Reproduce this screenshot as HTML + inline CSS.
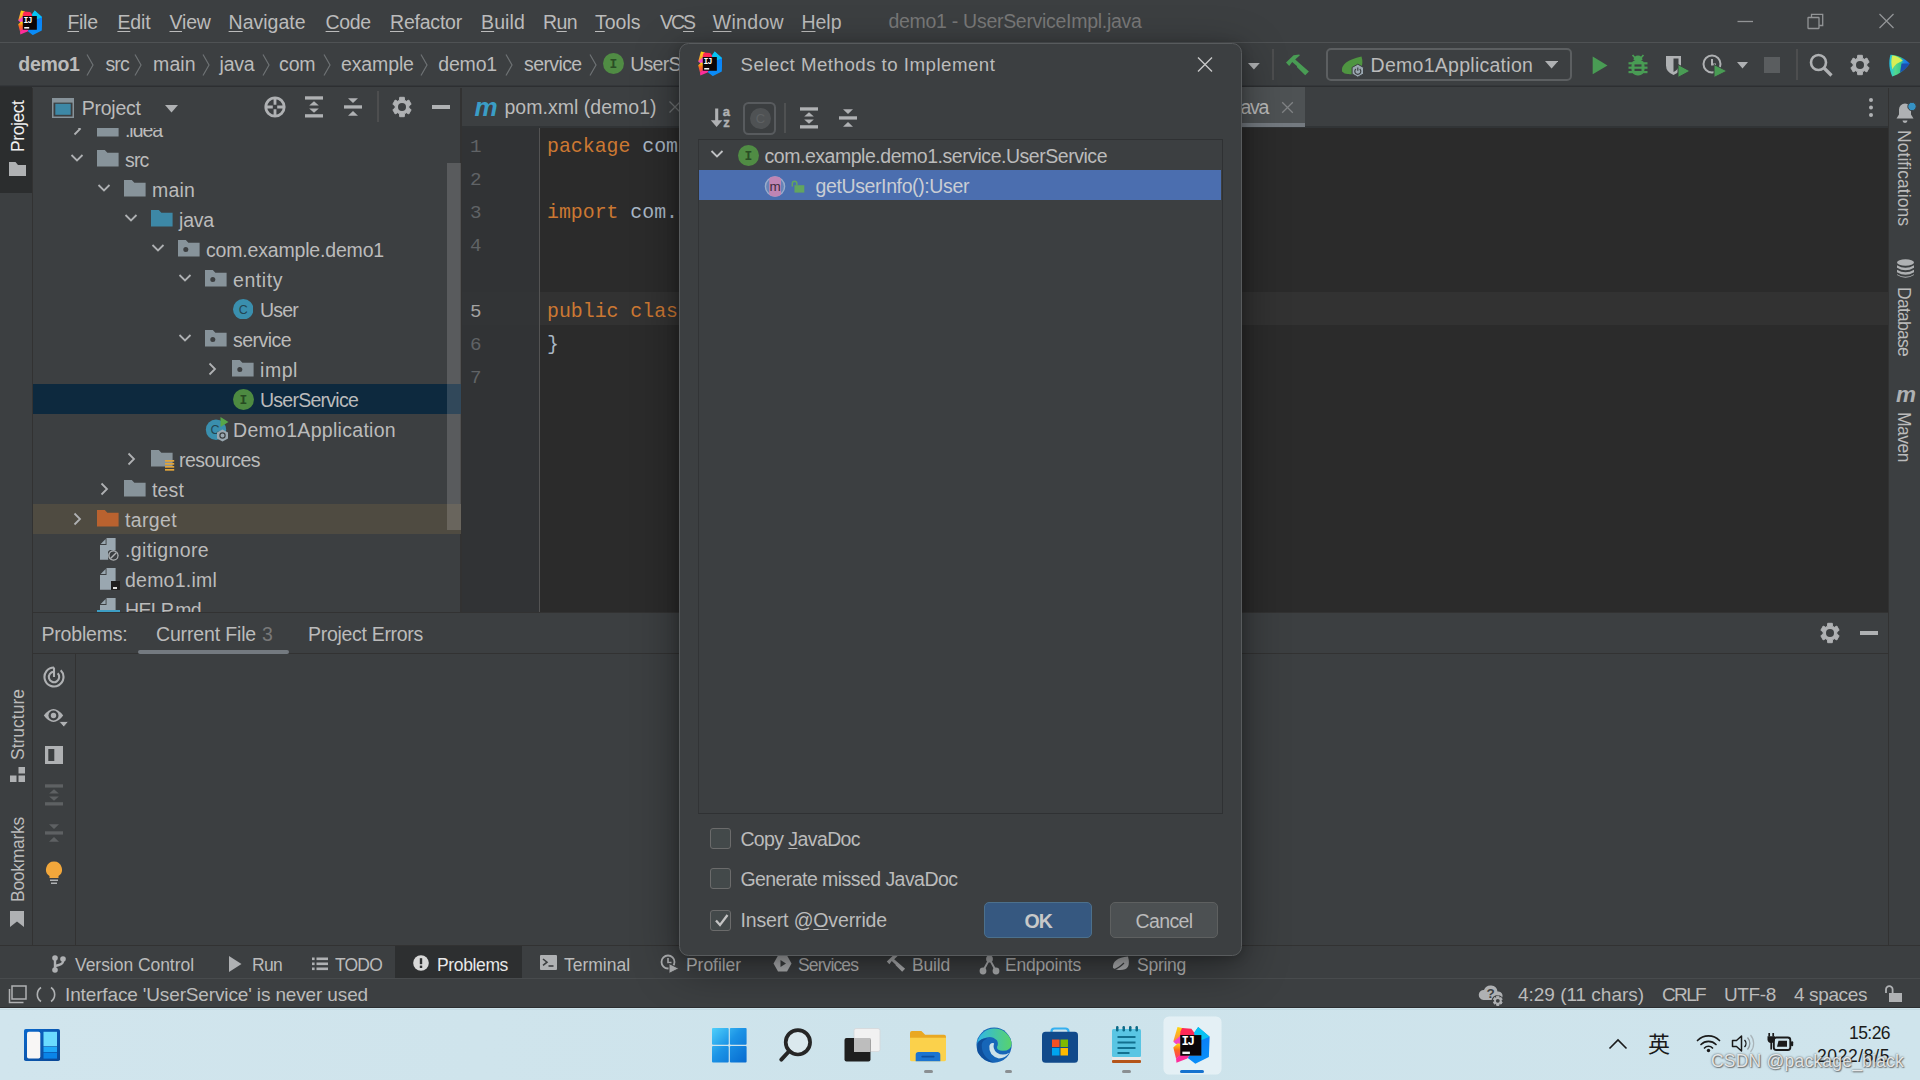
<!DOCTYPE html>
<html lang="en"><head><meta charset="utf-8"><title>demo1 - UserServiceImpl.java</title>
<style>
html,body{margin:0;padding:0}
body{width:1920px;height:1080px;overflow:hidden;background:#3c3f41;position:relative;font-family:"Liberation Sans",sans-serif}
.r{position:absolute;display:block}
.t{position:absolute;white-space:pre;font-family:"Liberation Sans",sans-serif}
.m{font-family:"Liberation Mono",monospace}
.clip{position:absolute;overflow:hidden}
u{text-decoration:underline;text-underline-offset:2px;text-decoration-thickness:1px}
</style></head>
<body>
<div class="r" style="left:0px;top:0px;width:1920px;height:1008px;background:#3c3f41;"></div>
<div class="r" style="left:0px;top:42px;width:1920px;height:1px;background:#4f5254;"></div>
<div class="r" style="left:0px;top:85px;width:1920px;height:1px;background:#34373a;"></div>
<div class="r" style="left:0px;top:86px;width:1920px;height:1px;background:#2d2f31;"></div>
<div class="r" style="left:0px;top:88px;width:32px;height:858px;background:#3c3f41;"></div>
<div class="r" style="left:0px;top:87px;width:32px;height:105.5px;background:#2b2d2e;"></div>
<div class="r" style="left:32px;top:88px;width:1px;height:858px;background:#323232;"></div>
<div class="r" style="left:1888px;top:88px;width:1px;height:858px;background:#323232;"></div>
<div class="r" style="left:460px;top:88px;width:2px;height:525px;background:#323232;"></div>
<div class="r" style="left:462px;top:88px;width:1426px;height:39px;background:#3c3f41;"></div>
<div class="r" style="left:462px;top:126px;width:1426px;height:2px;background:#313436;"></div>
<div class="r" style="left:462px;top:128px;width:1426px;height:485px;background:#2b2b2b;"></div>
<div class="r" style="left:462px;top:128px;width:77px;height:485px;background:#313335;"></div>
<div class="r" style="left:538.5px;top:128px;width:1.7px;height:485px;background:#535353;"></div>
<div class="r" style="left:462px;top:292px;width:77px;height:33px;background:#323436;"></div>
<div class="r" style="left:540px;top:292px;width:1348px;height:33px;background:#323232;"></div>
<div class="r" style="left:33px;top:612px;width:1855px;height:1px;background:#323232;"></div>
<div class="r" style="left:33px;top:653px;width:1855px;height:1px;background:#323232;"></div>
<div class="r" style="left:75px;top:654px;width:1px;height:291px;background:#323232;"></div>
<div class="r" style="left:0px;top:945px;width:1920px;height:1px;background:#323232;"></div>
<div class="r" style="left:395px;top:946px;width:127px;height:32px;background:#2d2f30;"></div>
<div class="r" style="left:0px;top:978px;width:1920px;height:1px;background:#484b4d;"></div>
<span class="t" style="left:67.40px;top:13.29px;font-size:19.50px;line-height:19.50px;color:#bbbbbb;letter-spacing:-0.280px;"><u>F</u>ile</span>
<span class="t" style="left:117.40px;top:13.29px;font-size:19.50px;line-height:19.50px;color:#bbbbbb;letter-spacing:-0.100px;"><u>E</u>dit</span>
<span class="t" style="left:169.50px;top:13.29px;font-size:19.50px;line-height:19.50px;color:#bbbbbb;letter-spacing:-0.178px;"><u>V</u>iew</span>
<span class="t" style="left:228.60px;top:13.29px;font-size:19.50px;line-height:19.50px;color:#bbbbbb;letter-spacing:-0.007px;"><u>N</u>avigate</span>
<span class="t" style="left:325.60px;top:13.29px;font-size:19.50px;line-height:19.50px;color:#bbbbbb;letter-spacing:-0.354px;"><u>C</u>ode</span>
<span class="t" style="left:390.00px;top:13.29px;font-size:19.50px;line-height:19.50px;color:#bbbbbb;letter-spacing:-0.211px;"><u>R</u>efactor</span>
<span class="t" style="left:481.00px;top:13.29px;font-size:19.50px;line-height:19.50px;color:#bbbbbb;letter-spacing:0.128px;"><u>B</u>uild</span>
<span class="t" style="left:543.00px;top:13.29px;font-size:19.50px;line-height:19.50px;color:#bbbbbb;letter-spacing:-0.590px;">R<u>u</u>n</span>
<span class="t" style="left:595.00px;top:13.29px;font-size:19.50px;line-height:19.50px;color:#bbbbbb;letter-spacing:-0.004px;"><u>T</u>ools</span>
<span class="t" style="left:660.00px;top:13.29px;font-size:19.50px;line-height:19.50px;color:#bbbbbb;letter-spacing:-2.032px;">VC<u>S</u></span>
<span class="t" style="left:712.80px;top:13.29px;font-size:19.50px;line-height:19.50px;color:#bbbbbb;letter-spacing:0.291px;"><u>W</u>indow</span>
<span class="t" style="left:801.40px;top:13.29px;font-size:19.50px;line-height:19.50px;color:#bbbbbb;letter-spacing:-0.001px;"><u>H</u>elp</span>
<span class="t" style="left:888.50px;top:11.59px;font-size:19.50px;line-height:19.50px;color:#787878;letter-spacing:-0.291px;">demo1 - UserServiceImpl.java</span>
<svg class="r" style="left:1730px;top:7.2px;" width="180" height="28" viewBox="0 0 180 28"><g stroke="#929496" stroke-width="1.300" fill="none"><path d="M7.500 14.500h15.500"/><rect x="78" y="10.500" width="11" height="11" rx="0.400"/><path d="M81.500 10.500v-3.200h11.200v11.200h-3.500"/><path d="M149.500 7l14 14M163.500 7l-14 14"/></g></svg>
<span class="t" style="left:18.30px;top:55.49px;font-size:19.50px;line-height:19.50px;color:#bbbbbb;letter-spacing:-0.330px;font-weight:bold;">demo1</span>
<span class="t" style="left:105.50px;top:55.49px;font-size:19.50px;line-height:19.50px;color:#bbbbbb;letter-spacing:-0.898px;">src</span>
<span class="t" style="left:153.00px;top:55.49px;font-size:19.50px;line-height:19.50px;color:#bbbbbb;letter-spacing:0.134px;">main</span>
<span class="t" style="left:219.50px;top:55.49px;font-size:19.50px;line-height:19.50px;color:#bbbbbb;letter-spacing:-0.193px;">java</span>
<span class="t" style="left:279.00px;top:55.49px;font-size:19.50px;line-height:19.50px;color:#bbbbbb;letter-spacing:-0.112px;">com</span>
<span class="t" style="left:341.00px;top:55.49px;font-size:19.50px;line-height:19.50px;color:#bbbbbb;letter-spacing:-0.129px;">example</span>
<span class="t" style="left:438.30px;top:55.49px;font-size:19.50px;line-height:19.50px;color:#bbbbbb;letter-spacing:-0.184px;">demo1</span>
<span class="t" style="left:524.00px;top:55.49px;font-size:19.50px;line-height:19.50px;color:#bbbbbb;letter-spacing:-0.609px;">service</span>
<svg class="r" style="left:85.3px;top:53.3px;" width="10" height="24" viewBox="0 0 10 24"><path d="M2 1.500l6 10.500-6 10.500" stroke="#6e7274" stroke-width="1.200" fill="none"/></svg>
<svg class="r" style="left:133.3px;top:53.3px;" width="10" height="24" viewBox="0 0 10 24"><path d="M2 1.500l6 10.500-6 10.500" stroke="#6e7274" stroke-width="1.200" fill="none"/></svg>
<svg class="r" style="left:201.3px;top:53.3px;" width="10" height="24" viewBox="0 0 10 24"><path d="M2 1.500l6 10.500-6 10.500" stroke="#6e7274" stroke-width="1.200" fill="none"/></svg>
<svg class="r" style="left:260.8px;top:53.3px;" width="10" height="24" viewBox="0 0 10 24"><path d="M2 1.500l6 10.500-6 10.500" stroke="#6e7274" stroke-width="1.200" fill="none"/></svg>
<svg class="r" style="left:321.8px;top:53.3px;" width="10" height="24" viewBox="0 0 10 24"><path d="M2 1.500l6 10.500-6 10.500" stroke="#6e7274" stroke-width="1.200" fill="none"/></svg>
<svg class="r" style="left:419.3px;top:53.3px;" width="10" height="24" viewBox="0 0 10 24"><path d="M2 1.500l6 10.500-6 10.500" stroke="#6e7274" stroke-width="1.200" fill="none"/></svg>
<svg class="r" style="left:504.3px;top:53.3px;" width="10" height="24" viewBox="0 0 10 24"><path d="M2 1.500l6 10.500-6 10.500" stroke="#6e7274" stroke-width="1.200" fill="none"/></svg>
<svg class="r" style="left:587.8px;top:53.3px;" width="10" height="24" viewBox="0 0 10 24"><path d="M2 1.500l6 10.500-6 10.500" stroke="#6e7274" stroke-width="1.200" fill="none"/></svg>
<svg class="r" style="left:52px;top:98px;" width="22" height="20" viewBox="0 0 22 20"><rect x="0.750" y="0.750" width="20.500" height="18.500" fill="#3c3f41" stroke="#87939a" stroke-width="1.500"/><rect x="0" y="0" width="22" height="4.600" fill="#87939a"/><rect x="3.300" y="5.800" width="15.400" height="11" fill="#3d88a6"/></svg>
<span class="t" style="left:81.75px;top:98.69px;font-size:19.50px;line-height:19.50px;color:#bbbbbb;letter-spacing:-0.241px;">Project</span>
<svg class="r" style="left:165px;top:104.5px;" width="13" height="8" viewBox="0 0 13 8"><path d="M0 0h13l-6.500 7.500z" fill="#afb1b3"/></svg>
<svg class="r" style="left:264px;top:96px;" width="22" height="22" viewBox="0 0 22 22"><g stroke="#afb1b3" stroke-width="2.800" fill="none"><circle cx="11" cy="11" r="9.200"/><path d="M11 1.500v7.300M11 13.200v7.300M1.500 11h7.300M13.200 11h7.300"/></g></svg>
<svg class="r" style="left:304.7px;top:96px;" width="18" height="22" viewBox="0 0 18 22"><g fill="#afb1b3"><rect x="0" y="0.300" width="18" height="3.300"/><rect x="0" y="18.200" width="18" height="3.300"/><path d="M9 5.200l4.800 4.300h-9.600z"/><path d="M9 16.800l4.800-4.300h-9.600z"/></g></svg>
<svg class="r" style="left:343.5px;top:97.8px;" width="18" height="18.4" viewBox="0 0 18 18.4"><g fill="#afb1b3"><rect x="0" y="7.300" width="18" height="3.300"/><path d="M9 5l5-4.700h-10z"/><path d="M9 13l5 4.700h-10z"/></g></svg>
<div class="r" style="left:377px;top:91px;width:2px;height:30.5px;background:#4d4e4f;"></div>
<svg class="r" style="left:390.7px;top:96px;" width="22" height="22" viewBox="0 0 22 22"><g transform="translate(11 11)"><polygon points="-2.49,-6.82 -2.30,-9.70 2.30,-9.70 2.49,-6.82 4.36,-5.67 6.83,-6.95 9.13,-2.76 6.85,-1.14 6.85,1.14 9.13,2.76 6.83,6.95 4.36,5.67 2.49,6.82 2.30,9.70 -2.30,9.70 -2.49,6.82 -4.36,5.67 -6.83,6.95 -9.13,2.76 -6.85,1.14 -6.85,-1.14 -9.13,-2.76 -6.83,-6.95 -4.36,-5.67" fill="#afb1b3" stroke="#afb1b3" stroke-width="1" stroke-linejoin="round"/><circle r="4" fill="#3c3f41"/></g></svg>
<div class="r" style="left:431.7px;top:105.35px;width:18px;height:3.3px;background:#afb1b3;"></div>
<div class="clip" style="left:33px;top:128px;width:427.500px;height:484px">
<div class="r" style="left:0px;top:256px;width:428px;height:30px;background:#0d293e;"></div>
<div class="r" style="left:0px;top:376px;width:428px;height:30px;background:#4f4b41;"></div>
<svg class="r" style="left:38px;top:-7.5px;" width="12" height="16" viewBox="0 0 12 16"><path d="M3.500 2.500l5.500 5.500-5.500 5.500" stroke="#afb1b3" stroke-width="1.800" fill="none"/></svg>
<svg class="r" style="left:64.2px;top:-8.4px;" width="22" height="17" viewBox="0 0 22 17"><path d="M0 0h7.800l2.600 2.800H21.600V16.600H0z" fill="#87939a"/></svg>
<span class="t" style="left:92.00px;top:-7.01px;font-size:19.50px;line-height:19.50px;color:#bbbbbb;letter-spacing:-1.056px;">.idea</span>
<svg class="r" style="left:35.7px;top:24.1px;" width="16" height="12" viewBox="0 0 16 12"><path d="M2.500 3l5.500 5.500 5.500-5.500" stroke="#afb1b3" stroke-width="1.800" fill="none"/></svg>
<svg class="r" style="left:64.2px;top:21.6px;" width="22" height="17" viewBox="0 0 22 17"><path d="M0 0h7.800l2.600 2.800H21.600V16.600H0z" fill="#87939a"/></svg>
<span class="t" style="left:92.00px;top:22.99px;font-size:19.50px;line-height:19.50px;color:#bbbbbb;letter-spacing:-0.831px;">src</span>
<svg class="r" style="left:62.7px;top:54.1px;" width="16" height="12" viewBox="0 0 16 12"><path d="M2.500 3l5.500 5.500 5.500-5.500" stroke="#afb1b3" stroke-width="1.800" fill="none"/></svg>
<svg class="r" style="left:91.2px;top:51.6px;" width="22" height="17" viewBox="0 0 22 17"><path d="M0 0h7.800l2.600 2.800H21.600V16.600H0z" fill="#87939a"/></svg>
<span class="t" style="left:119.00px;top:52.99px;font-size:19.50px;line-height:19.50px;color:#bbbbbb;letter-spacing:0.184px;">main</span>
<svg class="r" style="left:89.7px;top:84.1px;" width="16" height="12" viewBox="0 0 16 12"><path d="M2.500 3l5.500 5.500 5.500-5.500" stroke="#afb1b3" stroke-width="1.800" fill="none"/></svg>
<svg class="r" style="left:118.2px;top:81.6px;" width="22" height="17" viewBox="0 0 22 17"><path d="M0 0h7.800l2.600 2.800H21.600V16.600H0z" fill="#3d88a6"/></svg>
<span class="t" style="left:146.00px;top:82.99px;font-size:19.50px;line-height:19.50px;color:#bbbbbb;letter-spacing:-0.193px;">java</span>
<svg class="r" style="left:116.7px;top:114.1px;" width="16" height="12" viewBox="0 0 16 12"><path d="M2.500 3l5.500 5.500 5.500-5.500" stroke="#afb1b3" stroke-width="1.800" fill="none"/></svg>
<svg class="r" style="left:145.2px;top:111.6px;" width="22" height="17" viewBox="0 0 22 17"><path d="M0 0h7.800l2.600 2.800H21.600V16.600H0z" fill="#87939a"/><circle cx="7.800" cy="9.600" r="2.500" fill="#3c3f41"/></svg>
<span class="t" style="left:173.00px;top:112.99px;font-size:19.50px;line-height:19.50px;color:#bbbbbb;letter-spacing:-0.176px;">com.example.demo1</span>
<svg class="r" style="left:143.7px;top:144.1px;" width="16" height="12" viewBox="0 0 16 12"><path d="M2.500 3l5.500 5.500 5.500-5.500" stroke="#afb1b3" stroke-width="1.800" fill="none"/></svg>
<svg class="r" style="left:172.2px;top:141.6px;" width="22" height="17" viewBox="0 0 22 17"><path d="M0 0h7.800l2.600 2.800H21.600V16.600H0z" fill="#87939a"/><circle cx="7.800" cy="9.600" r="2.500" fill="#3c3f41"/></svg>
<span class="t" style="left:200.00px;top:142.99px;font-size:19.50px;line-height:19.50px;color:#bbbbbb;letter-spacing:0.566px;">entity</span>
<svg class="r" style="left:199.5px;top:170.95px;" width="20.5" height="20.5" viewBox="0 0 20.5 20.5"><circle cx="10.25" cy="10.25" r="10.25" fill="#3a8fae"/><text x="10.25" y="14.5" font-family="Liberation Sans" font-size="12.5" font-weight="normal" text-anchor="middle" fill="#234552">C</text></svg>
<span class="t" style="left:227.00px;top:172.99px;font-size:19.50px;line-height:19.50px;color:#bbbbbb;letter-spacing:-0.792px;">User</span>
<svg class="r" style="left:143.7px;top:204.1px;" width="16" height="12" viewBox="0 0 16 12"><path d="M2.500 3l5.500 5.500 5.500-5.500" stroke="#afb1b3" stroke-width="1.800" fill="none"/></svg>
<svg class="r" style="left:172.2px;top:201.6px;" width="22" height="17" viewBox="0 0 22 17"><path d="M0 0h7.800l2.600 2.800H21.600V16.600H0z" fill="#87939a"/><circle cx="7.800" cy="9.600" r="2.500" fill="#3c3f41"/></svg>
<span class="t" style="left:200.00px;top:202.99px;font-size:19.50px;line-height:19.50px;color:#bbbbbb;letter-spacing:-0.538px;">service</span>
<svg class="r" style="left:173px;top:232.5px;" width="12" height="16" viewBox="0 0 12 16"><path d="M3.500 2.500l5.500 5.500-5.500 5.500" stroke="#afb1b3" stroke-width="1.800" fill="none"/></svg>
<svg class="r" style="left:199.2px;top:231.6px;" width="22" height="17" viewBox="0 0 22 17"><path d="M0 0h7.800l2.600 2.800H21.600V16.600H0z" fill="#87939a"/><circle cx="7.800" cy="9.600" r="2.500" fill="#3c3f41"/></svg>
<span class="t" style="left:227.00px;top:232.99px;font-size:19.50px;line-height:19.50px;color:#bbbbbb;letter-spacing:0.562px;">impl</span>
<svg class="r" style="left:200px;top:261px;" width="21" height="21" viewBox="0 0 21 21"><circle cx="10.5" cy="10.5" r="10.5" fill="#4d8a41"/><text x="10.5" y="14.92" font-family="Liberation Mono" font-size="13" font-weight="bold" text-anchor="middle" fill="#274a22">I</text></svg>
<span class="t" style="left:227.00px;top:262.99px;font-size:19.50px;line-height:19.50px;color:#bbbbbb;letter-spacing:-0.745px;">UserService</span>
<svg class="r" style="left:172px;top:288.5px;" width="26" height="26" viewBox="0 0 26 26"><circle cx="11" cy="12.700" r="10.200" fill="#3a8fae"/><text x="10" y="17" text-anchor="middle" font-family="Liberation Sans" font-size="12.500" fill="#234552">C</text><path d="M15.500 0l8 5-8 5z" fill="#57a64a"/><path d="M17.500 12.500l5.500 3v6l-5.500 3-5.500-3v-6z" fill="#9aa7b0"/><circle cx="17.500" cy="18.500" r="2.600" fill="none" stroke="#3c3f41" stroke-width="1.200"/></svg>
<span class="t" style="left:200.00px;top:292.99px;font-size:19.50px;line-height:19.50px;color:#bbbbbb;letter-spacing:0.297px;">Demo1Application</span>
<svg class="r" style="left:92px;top:322.5px;" width="12" height="16" viewBox="0 0 12 16"><path d="M3.500 2.500l5.500 5.500-5.500 5.500" stroke="#afb1b3" stroke-width="1.800" fill="none"/></svg>
<svg class="r" style="left:118.2px;top:321.8px;" width="22" height="17" viewBox="0 0 22 17"><path d="M0 0h7.800l2.600 2.800H21.600V16.600H0z" fill="#87939a"/></svg>
<svg class="r" style="left:132px;top:332px;" width="11" height="11" viewBox="0 0 11 11"><g fill="#e2a53a"><rect x="0" y="0" width="9.200" height="1.700"/><rect x="0" y="3" width="9.200" height="1.700"/><rect x="0" y="6" width="9.200" height="1.700"/><rect x="0" y="9" width="9.200" height="1.700"/></g></svg>
<span class="t" style="left:146.00px;top:322.99px;font-size:19.50px;line-height:19.50px;color:#bbbbbb;letter-spacing:-0.512px;">resources</span>
<svg class="r" style="left:65px;top:352.5px;" width="12" height="16" viewBox="0 0 12 16"><path d="M3.500 2.500l5.500 5.500-5.500 5.500" stroke="#afb1b3" stroke-width="1.800" fill="none"/></svg>
<svg class="r" style="left:91.2px;top:351.6px;" width="22" height="17" viewBox="0 0 22 17"><path d="M0 0h7.800l2.600 2.800H21.600V16.600H0z" fill="#87939a"/></svg>
<span class="t" style="left:119.00px;top:352.99px;font-size:19.50px;line-height:19.50px;color:#bbbbbb;letter-spacing:0.143px;">test</span>
<svg class="r" style="left:38px;top:382.5px;" width="12" height="16" viewBox="0 0 12 16"><path d="M3.500 2.500l5.500 5.500-5.500 5.500" stroke="#afb1b3" stroke-width="1.800" fill="none"/></svg>
<svg class="r" style="left:64.2px;top:381.6px;" width="22" height="17" viewBox="0 0 22 17"><path d="M0 0h7.800l2.600 2.800H21.600V16.600H0z" fill="#b9622f"/></svg>
<span class="t" style="left:92.00px;top:382.99px;font-size:19.50px;line-height:19.50px;color:#bbbbbb;letter-spacing:0.357px;">target</span>
<svg class="r" style="left:67px;top:410.2px;" width="17" height="23" viewBox="0 0 17 23"><path d="M6.500 0h9.100v21.700H0V7h6.500z" fill="#9aa7b0"/><path d="M0.700 6L5.600 0.900v5.100z" fill="#9aa7b0"/></svg>
<span class="t" style="left:92.00px;top:412.99px;font-size:19.50px;line-height:19.50px;color:#bbbbbb;letter-spacing:0.379px;">.gitignore</span>
<svg class="r" style="left:67px;top:440.2px;" width="17" height="23" viewBox="0 0 17 23"><path d="M6.500 0h9.100v21.700H0V7h6.500z" fill="#9aa7b0"/><path d="M0.700 6L5.600 0.900v5.100z" fill="#9aa7b0"/></svg>
<span class="t" style="left:92.00px;top:442.99px;font-size:19.50px;line-height:19.50px;color:#bbbbbb;letter-spacing:0.228px;">demo1.iml</span>
<svg class="r" style="left:67px;top:470.2px;" width="17" height="23" viewBox="0 0 17 23"><path d="M6.500 0h9.100v21.700H0V7h6.500z" fill="#9aa7b0"/><path d="M0.700 6L5.600 0.900v5.100z" fill="#9aa7b0"/></svg>
<span class="t" style="left:92.00px;top:472.99px;font-size:19.50px;line-height:19.50px;color:#bbbbbb;letter-spacing:-0.704px;">HELP.md</span>
<svg class="r" style="left:74.6px;top:421.8px;" width="12" height="12" viewBox="0 0 12 12"><circle cx="5.500" cy="5.500" r="4.600" fill="#3c3f41" stroke="#afb1b3" stroke-width="1.400"/><circle cx="5.500" cy="5.500" r="6" fill="none" stroke="#3c3f41" stroke-width="1.200"/><path d="M2.500 8.500l6-6" stroke="#afb1b3" stroke-width="1.400"/></svg>
<div class="r" style="left:78px;top:453px;width:9px;height:9px;background:#1e1e1e;"></div>
<div class="r" style="left:80px;top:459px;width:4px;height:1.5px;background:#ddd;"></div>
<div class="r" style="left:64px;top:482px;width:23px;height:2px;background:#3d9ec4;"></div>
<div class="r" style="left:414px;top:35px;width:13.5px;height:367px;background:rgba(255,255,255,0.15);"></div>
</div>
<span class="t" style="left:474.50px;top:93.89px;font-size:26.00px;line-height:26.00px;color:#3a9dc6;letter-spacing:-0.120px;font-weight:bold;font-style:italic;">m</span>
<span class="t" style="left:504.50px;top:98.19px;font-size:19.50px;line-height:19.50px;color:#bbbbbb;letter-spacing:0.020px;">pom.xml (demo1)</span>
<svg class="r" style="left:668px;top:100px;" width="14" height="14" viewBox="0 0 14 14"><path d="M1.500 1.500l11 11M12.500 1.500l-11 11" stroke="#6e7173" stroke-width="1.300"/></svg>
<div class="r" style="left:1040px;top:87px;width:265px;height:40px;background:#4e5254;"></div>
<div class="r" style="left:1040px;top:123px;width:265px;height:4px;background:#747a80;"></div>
<span class="t" style="left:1109.80px;top:98.19px;font-size:19.50px;line-height:19.50px;color:#bbbbbb;letter-spacing:-1.301px;">UserServiceImpl.java</span>
<svg class="r" style="left:1280.5px;top:100.5px;" width="13" height="13" viewBox="0 0 13 13"><path d="M1.200 1.200l10.600 10.600M11.800 1.200l-10.600 10.600" stroke="#808385" stroke-width="1.300"/></svg>
<svg class="r" style="left:1867px;top:97px;" width="8" height="22" viewBox="0 0 8 22"><g fill="#afb1b3"><circle cx="4" cy="3" r="2"/><circle cx="4" cy="10.500" r="2"/><circle cx="4" cy="18" r="2"/></g></svg>
<span class="t m" style="left:470.00px;top:138.28px;font-size:19.20px;line-height:19.20px;color:#606366;">1</span>
<span class="t m" style="left:470.00px;top:171.28px;font-size:19.20px;line-height:19.20px;color:#606366;">2</span>
<span class="t m" style="left:470.00px;top:204.28px;font-size:19.20px;line-height:19.20px;color:#606366;">3</span>
<span class="t m" style="left:470.00px;top:237.28px;font-size:19.20px;line-height:19.20px;color:#606366;">4</span>
<span class="t m" style="left:470.00px;top:303.28px;font-size:19.20px;line-height:19.20px;color:#a4a3a3;">5</span>
<span class="t m" style="left:470.00px;top:336.28px;font-size:19.20px;line-height:19.20px;color:#606366;">6</span>
<span class="t m" style="left:470.00px;top:369.28px;font-size:19.20px;line-height:19.20px;color:#606366;">7</span>
<span class="t m" style="left:547.00px;top:136.78px;font-size:19.85px;line-height:19.85px;color:#a9b7c6;"><span style="color:#cc7832">package</span> com.example.demo1.service.impl;</span>
<span class="t m" style="left:547.00px;top:202.78px;font-size:19.85px;line-height:19.85px;color:#a9b7c6;"><span style="color:#cc7832">import</span> com.example.demo1.service.UserService;</span>
<span class="t m" style="left:547.00px;top:301.78px;font-size:19.85px;line-height:19.85px;color:#a9b7c6;"><span style="color:#cc7832">public class</span> UserServiceImpl <span style="color:#cc7832">implements</span> UserService {</span>
<span class="t m" style="left:547.00px;top:334.78px;font-size:19.85px;line-height:19.85px;color:#a9b7c6;">}</span>
<span class="t" style="left:41.50px;top:624.89px;font-size:19.50px;line-height:19.50px;color:#bbbbbb;letter-spacing:-0.197px;">Problems:</span>
<span class="t" style="left:156.00px;top:624.89px;font-size:19.50px;line-height:19.50px;color:#bbbbbb;letter-spacing:-0.154px;">Current File</span>
<span class="t" style="left:262.00px;top:624.89px;font-size:19.50px;line-height:19.50px;color:#787878;letter-spacing:-1.344px;">3</span>
<div class="r" style="left:138px;top:650px;width:151px;height:3.5px;background:#747a80;border-radius:2px;"></div>
<span class="t" style="left:308.00px;top:624.89px;font-size:19.50px;line-height:19.50px;color:#bbbbbb;letter-spacing:-0.299px;">Project Errors</span>
<svg class="r" style="left:1819px;top:622px;" width="22" height="22" viewBox="0 0 22 22"><g transform="translate(11 11)"><polygon points="-2.49,-6.82 -2.30,-9.70 2.30,-9.70 2.49,-6.82 4.36,-5.67 6.83,-6.95 9.13,-2.76 6.85,-1.14 6.85,1.14 9.13,2.76 6.83,6.95 4.36,5.67 2.49,6.82 2.30,9.70 -2.30,9.70 -2.49,6.82 -4.36,5.67 -6.83,6.95 -9.13,2.76 -6.85,1.14 -6.85,-1.14 -9.13,-2.76 -6.83,-6.95 -4.36,-5.67" fill="#afb1b3" stroke="#afb1b3" stroke-width="1" stroke-linejoin="round"/><circle r="4" fill="#3c3f41"/></g></svg>
<div class="r" style="left:1860px;top:631.35px;width:18px;height:3.3px;background:#afb1b3;"></div>
<svg class="r" style="left:43px;top:666px;" width="22" height="22" viewBox="0 0 22 22"><g stroke="#afb1b3" stroke-width="2.100" fill="none"><path d="M11 1.500a9.500 9.500 0 1 0 6.720 2.780"/><path d="M11 5.800a5.200 5.200 0 1 0 3.680 1.520"/><path d="M11 1.500v9.500"/></g></svg>
<svg class="r" style="left:43px;top:706px;" width="26" height="24" viewBox="0 0 26 24"><path d="M0.800 9.500Q10.500-3.500 20.200 9.500Q10.500 22.500 0.800 9.500z" fill="#afb1b3"/><circle cx="10.500" cy="9.500" r="5" fill="#3c3f41"/><circle cx="10.500" cy="9.500" r="2.700" fill="#afb1b3"/><path d="M16 15.500h9.500l-4.750 5.500z" fill="#afb1b3" stroke="#3c3f41" stroke-width="0.800"/></svg>
<svg class="r" style="left:45px;top:746px;" width="18" height="18" viewBox="0 0 18 18"><rect x="0" y="0" width="18" height="18" fill="#afb1b3"/><rect x="3.300" y="3" width="6" height="12" fill="#3c3f41"/></svg>
<svg class="r" style="left:45px;top:784px;" width="18" height="22" viewBox="0 0 18 22"><g fill="#5e6163"><rect x="0" y="0.300" width="18" height="3.300"/><rect x="0" y="18.200" width="18" height="3.300"/><path d="M9 5.200l4.800 4.300h-9.600z"/><path d="M9 16.800l4.800-4.300h-9.600z"/></g></svg>
<svg class="r" style="left:45px;top:823.8px;" width="18" height="18.4" viewBox="0 0 18 18.4"><g fill="#5e6163"><rect x="0" y="7.300" width="18" height="3.300"/><path d="M9 5l5-4.700h-10z"/><path d="M9 13l5 4.700h-10z"/></g></svg>
<svg class="r" style="left:45px;top:861px;" width="18" height="24" viewBox="0 0 18 24"><path d="M9 0.500a8 8 0 0 1 4.500 14.600v1.900h-9v-1.900a8 8 0 0 1 4.500-14.600z" fill="#f2a73b"/><rect x="5" y="18.500" width="8" height="1.500" fill="#afb1b3"/><rect x="6" y="21.500" width="6" height="1.500" fill="#afb1b3"/></svg>
<span class="t" style="left:75.00px;top:956.59px;font-size:17.50px;line-height:17.50px;color:#bbbbbb;letter-spacing:-0.043px;">Version Control</span>
<span class="t" style="left:252.00px;top:956.59px;font-size:17.50px;line-height:17.50px;color:#bbbbbb;letter-spacing:-0.701px;">Run</span>
<span class="t" style="left:335.00px;top:956.59px;font-size:17.50px;line-height:17.50px;color:#bbbbbb;letter-spacing:-0.808px;">TODO</span>
<span class="t" style="left:437.00px;top:956.59px;font-size:17.50px;line-height:17.50px;color:#e8e8e8;letter-spacing:-0.364px;">Problems</span>
<span class="t" style="left:564.00px;top:956.59px;font-size:17.50px;line-height:17.50px;color:#bbbbbb;letter-spacing:-0.016px;">Terminal</span>
<span class="t" style="left:686.00px;top:956.59px;font-size:17.50px;line-height:17.50px;color:#bbbbbb;letter-spacing:-0.054px;">Profiler</span>
<span class="t" style="left:798.00px;top:956.59px;font-size:17.50px;line-height:17.50px;color:#bbbbbb;letter-spacing:-0.888px;">Services</span>
<span class="t" style="left:912.00px;top:956.59px;font-size:17.50px;line-height:17.50px;color:#bbbbbb;letter-spacing:-0.183px;">Build</span>
<span class="t" style="left:1005.00px;top:956.59px;font-size:17.50px;line-height:17.50px;color:#bbbbbb;letter-spacing:-0.203px;">Endpoints</span>
<span class="t" style="left:1137.00px;top:956.59px;font-size:17.50px;line-height:17.50px;color:#bbbbbb;letter-spacing:-0.264px;">Spring</span>
<svg class="r" style="left:51px;top:955px;" width="16" height="18" viewBox="0 0 16 18"><g stroke="#afb1b3" stroke-width="2.400" fill="none"><path d="M4 3v12"/><path d="M12 4v2.500q0 3-8 4.500"/></g><circle cx="4" cy="3" r="2.800" fill="#afb1b3"/><circle cx="12" cy="4" r="2.800" fill="#afb1b3"/><circle cx="4" cy="15" r="2.800" fill="#afb1b3"/></svg>
<svg class="r" style="left:229px;top:956px;" width="13" height="16" viewBox="0 0 13 16"><path d="M0 0l12.500 8-12.500 8z" fill="#afb1b3"/></svg>
<svg class="r" style="left:312px;top:957px;" width="16" height="14" viewBox="0 0 16 14"><g fill="#afb1b3"><rect x="0" y="0.500" width="2.600" height="2.600"/><rect x="4.500" y="0.500" width="11.500" height="2.600"/><rect x="0" y="5.500" width="2.600" height="2.600"/><rect x="4.500" y="5.500" width="11.500" height="2.600"/><rect x="0" y="10.500" width="2.600" height="2.600"/><rect x="4.500" y="10.500" width="11.500" height="2.600"/></g></svg>
<svg class="r" style="left:413px;top:955px;" width="16" height="16" viewBox="0 0 16 16"><circle cx="8" cy="8" r="7.800" fill="#d8d8d8"/><rect x="6.800" y="3.200" width="2.400" height="6" fill="#2d2f30"/><rect x="6.800" y="10.600" width="2.400" height="2.400" fill="#2d2f30"/></svg>
<svg class="r" style="left:540px;top:955px;" width="17" height="16" viewBox="0 0 17 16"><rect x="0" y="0" width="17" height="15" rx="1" fill="#afb1b3"/><path d="M3 4l4 3.200-4 3.200" stroke="#3c3f41" stroke-width="1.600" fill="none"/><path d="M8.500 11h5" stroke="#3c3f41" stroke-width="1.600"/></svg>
<svg class="r" style="left:660px;top:954px;" width="20" height="20" viewBox="0 0 20 20"><circle cx="8" cy="8" r="6.500" fill="none" stroke="#afb1b3" stroke-width="1.800"/><path d="M8 4v4.500h3.500" stroke="#afb1b3" stroke-width="1.600" fill="none"/><path d="M9 9.500l10 5-10 5z" fill="#afb1b3" stroke="#3c3f41" stroke-width="1"/></svg>
<svg class="r" style="left:773px;top:955px;" width="19" height="18" viewBox="0 0 19 18"><path d="M5 0.500h9l4.500 8-4.500 8h-9l-4.500-8z" fill="#afb1b3"/><path d="M7.500 5l5.500 3.500-5.500 3.500z" fill="#3c3f41"/></svg>
<svg class="r" style="left:886px;top:954px;" width="20" height="19" viewBox="1 0.500 25 23"><path d="M2 9.500L9.600 2.300 15.200 1.500 15.900 2.300 11.200 6.600 16.600 11.300 24.900 18.500 21.200 22.200 13.100 14.300 12.900 13.100 8.200 9 5.200 12.900z" fill="#afb1b3"/></svg>
<svg class="r" style="left:979px;top:954.5px;" width="21" height="20" viewBox="0 0 21 20"><g stroke="#afb1b3" stroke-width="1.900" fill="none"><path d="M4 16l6.500-12 6.500 12"/></g><circle cx="10.500" cy="4" r="3.400" fill="#afb1b3"/><circle cx="4" cy="16" r="3.400" fill="#afb1b3"/><circle cx="17" cy="16" r="3.400" fill="#afb1b3"/></svg>
<svg class="r" style="left:1112px;top:955px;" width="20" height="17" viewBox="0 0 20 17"><path d="M1 13Q0 3 16 1.500Q20 16 6.500 15Q4 15 1 13z" fill="#afb1b3"/><path d="M0 15.500Q6 14 12 8" stroke="#3c3f41" stroke-width="1.200" fill="none"/></svg>
<svg class="r" style="left:8px;top:985px;" width="20" height="19" viewBox="0 0 20 19"><rect x="4" y="1" width="14" height="13" fill="none" stroke="#afb1b3" stroke-width="1.500"/><path d="M1.500 4v13.500h14" fill="none" stroke="#afb1b3" stroke-width="1.500"/></svg>
<svg class="r" style="left:35px;top:985px;" width="22" height="19" viewBox="0 0 22 19"><path d="M6 2.500a8.500 8.500 0 0 0 0 14M16 2.500a8.500 8.500 0 0 1 0 14" fill="none" stroke="#afb1b3" stroke-width="1.600"/></svg>
<span class="t" style="left:65.00px;top:984.82px;font-size:19.00px;line-height:19.00px;color:#bbbbbb;letter-spacing:-0.141px;">Interface 'UserService' is never used</span>
<svg class="r" style="left:1478px;top:983px;" width="28" height="24" viewBox="0 0 28 24"><path d="M5.500 17a5 5 0 0 1 0.500-10a7 7 0 0 1 13.500 1.500a4.300 4.300 0 0 1 1.500 8.500z" fill="#afb1b3"/><text x="8.600" y="15" font-family="Liberation Sans" font-weight="bold" font-size="13.500" fill="#3c3f41">?</text><circle cx="19.500" cy="18" r="6" fill="#3c3f41"/></svg>
<svg class="r" style="left:1491.7px;top:995.2px;" width="11.6" height="11.6" viewBox="0 0 11.6 11.6"><g transform="translate(5.8 5.8)"><polygon points="-1.19,-3.27 -1.10,-4.66 1.10,-4.66 1.19,-3.27 2.09,-2.72 3.28,-3.33 4.38,-1.32 3.29,-0.55 3.29,0.55 4.38,1.32 3.28,3.33 2.09,2.72 1.19,3.27 1.10,4.66 -1.10,4.66 -1.19,3.27 -2.09,2.72 -3.28,3.33 -4.38,1.32 -3.29,0.55 -3.29,-0.55 -4.38,-1.32 -3.28,-3.33 -2.09,-2.72" fill="#afb1b3" stroke="#afb1b3" stroke-width="1" stroke-linejoin="round"/><circle r="1.92" fill="#3c3f41"/></g></svg>
<span class="t" style="left:1518.00px;top:984.82px;font-size:19.00px;line-height:19.00px;color:#bbbbbb;letter-spacing:-0.024px;">4:29 (11 chars)</span>
<span class="t" style="left:1662.00px;top:984.82px;font-size:19.00px;line-height:19.00px;color:#bbbbbb;letter-spacing:-1.653px;">CRLF</span>
<span class="t" style="left:1724.00px;top:984.82px;font-size:19.00px;line-height:19.00px;color:#bbbbbb;letter-spacing:-0.365px;">UTF-8</span>
<span class="t" style="left:1794.00px;top:984.82px;font-size:19.00px;line-height:19.00px;color:#bbbbbb;letter-spacing:-0.380px;">4 spaces</span>
<svg class="r" style="left:1884px;top:984px;" width="19" height="19" viewBox="0 0 19 19"><rect x="5" y="9" width="13" height="9" fill="#afb1b3"/><path d="M2 9v-3.500a3.300 3.300 0 0 1 6.600 0v3.500" fill="none" stroke="#afb1b3" stroke-width="1.800"/></svg>
<span class="t" style="left:9.95px;top:151.50px;font-size:17.5px;line-height:17.5px;color:#f0f0f0;letter-spacing:-0.423px;transform-origin:0 0;transform:rotate(-90deg)">Project</span>
<svg class="r" style="left:8.8px;top:162px;" width="17" height="14" viewBox="0 0 17 14"><path d="M0 0h6.500l2.500 3H17v11H0z" fill="#afb1b3"/></svg>
<span class="t" style="left:9.95px;top:760.00px;font-size:17.5px;line-height:17.5px;color:#bbbbbb;letter-spacing:0.001px;transform-origin:0 0;transform:rotate(-90deg)">Structure</span>
<svg class="r" style="left:10px;top:767px;" width="15" height="15" viewBox="0 0 15 15"><g fill="#afb1b3"><rect x="0" y="8.500" width="6.500" height="6.500"/><rect x="8.500" y="8.500" width="6.500" height="6.500"/><rect x="8.500" y="0" width="6.500" height="6.500"/></g></svg>
<span class="t" style="left:9.95px;top:902.00px;font-size:17.5px;line-height:17.5px;color:#bbbbbb;letter-spacing:-0.280px;transform-origin:0 0;transform:rotate(-90deg)">Bookmarks</span>
<svg class="r" style="left:10px;top:911px;" width="14" height="16" viewBox="0 0 14 16"><path d="M0 0h14v16l-7-5.500-7 5.500z" fill="#afb1b3"/></svg>
<svg class="r" style="left:1896px;top:101px;" width="22" height="24" viewBox="0 0 22 24"><path d="M9 2.500a6 6 0 0 1 6 6v5l2.500 4h-17l2.500-4v-5a6 6 0 0 1 6-6z" fill="#afb1b3"/><path d="M6.500 19.500h5a2.500 2.500 0 0 1-5 0z" fill="#afb1b3"/><circle cx="16" cy="5.500" r="4.200" fill="#3592c4" stroke="#3c3f41" stroke-width="1"/></svg>
<span class="t" style="left:1912.05px;top:130.00px;font-size:17.5px;line-height:17.5px;color:#bbbbbb;letter-spacing:0.053px;transform-origin:0 0;transform:rotate(90deg)">Notifications</span>
<svg class="r" style="left:1896px;top:259px;" width="19" height="19" viewBox="0 0 19 19"><g fill="#afb1b3"><ellipse cx="9.500" cy="3.500" rx="8.500" ry="3.200"/><path d="M1 6.200q8.500 5 17 0v2.600q-8.500 5-17 0z"/><path d="M1 10.700q8.500 5 17 0v2.600q-8.500 5-17 0z"/><path d="M1 15.200q8.500 5 17 0v0.800q-8.500 5.500-17 0z"/></g></svg>
<span class="t" style="left:1912.05px;top:287.00px;font-size:17.5px;line-height:17.5px;color:#bbbbbb;letter-spacing:-0.739px;transform-origin:0 0;transform:rotate(90deg)">Database</span>
<span class="t" style="left:1896.00px;top:384.35px;font-size:22.50px;line-height:22.50px;color:#afb1b3;letter-spacing:0.493px;font-weight:bold;font-style:italic;">m</span>
<span class="t" style="left:1912.05px;top:412.00px;font-size:17.5px;line-height:17.5px;color:#bbbbbb;letter-spacing:-0.504px;transform-origin:0 0;transform:rotate(90deg)">Maven</span>
<svg class="r" style="left:1248.2px;top:62.5px;" width="13" height="8" viewBox="0 0 13 8"><path d="M0 0h11.800l-5.900 6.600z" fill="#afb1b3"/></svg>
<div class="r" style="left:1271.8px;top:49px;width:2px;height:30.5px;background:#4d4e4f;"></div>
<svg class="r" style="left:1284px;top:53px;" width="27" height="24" viewBox="0 0 27 24"><path d="M2 9.500L9.600 2.300 15.200 1.500 15.900 2.300 11.200 6.600 16.600 11.300 24.900 18.500 21.200 22.200 13.100 14.300 12.900 13.100 8.200 9 5.200 12.900z" fill="#499c54"/></svg>
<div class="r" style="left:1326px;top:48px;width:242px;height:28.500px;border:2px solid #5c5f61;border-radius:5px"></div>
<svg class="r" style="left:1340px;top:54px;" width="26" height="25" viewBox="0 0 26 25"><path d="M2 17.500Q0.500 7 21.500 2.500Q23.500 9 21 14Q17 21.500 8.500 20Q5 20.500 2 17.500z" fill="#4f9541"/><path d="M17.800 10.200l5.700 3.250v6.500l-5.700 3.250-5.700-3.250v-6.500z" fill="#9aa7b0" stroke="#3c3f41" stroke-width="1"/><path d="M15.900 15a3 3 0 1 0 3.800 0" fill="none" stroke="#3c3f41" stroke-width="1.200"/><path d="M17.800 13.500v3.200" stroke="#3c3f41" stroke-width="1.200"/></svg>
<span class="t" style="left:1370.60px;top:56.39px;font-size:19.50px;line-height:19.50px;color:#bbbbbb;letter-spacing:0.266px;">Demo1Application</span>
<svg class="r" style="left:1544.5px;top:61.2px;" width="13.5" height="8" viewBox="0 0 13.5 8"><path d="M0 0h13.200l-6.600 7.600z" fill="#afb1b3"/></svg>
<svg class="r" style="left:1592px;top:55.5px;" width="17" height="19" viewBox="0 0 17 19"><path d="M0.700 0.500l14.800 8.900-14.800 8.900z" fill="#499c54"/></svg>
<svg class="r" style="left:1627px;top:54px;" width="22" height="23" viewBox="0 0 22 23"><g fill="#499c54"><rect x="4.500" y="5.500" width="13" height="16" rx="6"/><path d="M6.500 6a4.500 4.500 0 0 1 9 0z"/><rect x="1.500" y="8.200" width="19" height="2.200"/><rect x="1.500" y="12.600" width="19" height="2.200"/><rect x="1.500" y="17" width="19" height="2.200"/><path d="M6.200 0.500l3.200 3.800-1.300 1-3.200-3.800zM15.800 0.500l-3.200 3.800 1.300 1 3.200-3.800z"/></g><rect x="7.500" y="10.400" width="7" height="2.200" fill="#3c3f41"/><rect x="7.500" y="14.800" width="7" height="2.200" fill="#3c3f41"/></svg>
<svg class="r" style="left:1665px;top:54px;" width="26" height="24" viewBox="0 0 26 24"><path d="M1 2h15v9.500q0 6.500-7.500 9.500-7.500-3-7.500-9.500z" fill="#afb1b3"/><path d="M8.500 4.500h5v7q0 4-5 6.500z" fill="#3c3f41"/><path d="M13 10.500l12 6.500-12 6.500z" fill="#499c54" stroke="#3c3f41" stroke-width="1"/></svg>
<svg class="r" style="left:1702px;top:54px;" width="26" height="24" viewBox="0 0 26 24"><circle cx="10" cy="10" r="8.500" fill="none" stroke="#afb1b3" stroke-width="2"/><path d="M10 5v5.500h4" stroke="#afb1b3" stroke-width="2" fill="none"/><path d="M12 10.500l13 6.500-13 6.500z" fill="#499c54" stroke="#3c3f41" stroke-width="1"/></svg>
<svg class="r" style="left:1737px;top:62px;" width="11" height="7" viewBox="0 0 11 7"><path d="M0 0h11l-5.500 6.500z" fill="#afb1b3"/></svg>
<div class="r" style="left:1764px;top:57px;width:16px;height:16px;background:#5a5d5f;"></div>
<div class="r" style="left:1796.3px;top:49px;width:2px;height:30.5px;background:#4d4e4f;"></div>
<svg class="r" style="left:1809px;top:53px;" width="24" height="24" viewBox="0 0 24 24"><circle cx="9.500" cy="9.500" r="7.500" fill="none" stroke="#afb1b3" stroke-width="2.600"/><path d="M15 15l7.500 7.500" stroke="#afb1b3" stroke-width="3.200"/></svg>
<svg class="r" style="left:1849px;top:54px;" width="22" height="22" viewBox="0 0 22 22"><g transform="translate(11 11)"><polygon points="-2.49,-6.82 -2.30,-9.70 2.30,-9.70 2.49,-6.82 4.36,-5.67 6.83,-6.95 9.13,-2.76 6.85,-1.14 6.85,1.14 9.13,2.76 6.83,6.95 4.36,5.67 2.49,6.82 2.30,9.70 -2.30,9.70 -2.49,6.82 -4.36,5.67 -6.83,6.95 -9.13,2.76 -6.85,1.14 -6.85,-1.14 -9.13,-2.76 -6.83,-6.95 -4.36,-5.67" fill="#afb1b3" stroke="#afb1b3" stroke-width="1" stroke-linejoin="round"/><circle r="4" fill="#3c3f41"/></g></svg>
<svg class="r" style="left:1888px;top:54px;" width="23" height="24" viewBox="0 0 23 24"><defs><linearGradient id="cw" x1="0" y1="0" x2="1" y2="0"><stop offset="0" stop-color="#1fc4e8"/><stop offset="0.3" stop-color="#55d88c"/><stop offset="0.55" stop-color="#37cc8c"/><stop offset="0.72" stop-color="#1a86e4"/><stop offset="1" stop-color="#1a6ae0"/></linearGradient></defs><path d="M2.500 0.800C9 0.800 17 4.500 21.700 9.600C17.500 15.500 11 20.500 4.300 22.600C1.300 16 0.300 8 2.500 0.800z" fill="url(#cw)"/><path d="M4.200 1.500C8.500 1.800 12.500 3.800 14.800 6.800C10.500 8.500 6.500 10.500 4.500 15.500C3 10.500 3 6 4.200 1.500z" fill="#e4f050" opacity="0.92"/><path d="M13.500 9.600L21.700 9.600C19.200 13 16 16.200 12 18.800z" fill="#1b4fae"/></svg>
<svg class="r" style="left:603.2px;top:52.8px;" width="21" height="21" viewBox="0 0 21 21"><circle cx="10.5" cy="10.5" r="10.5" fill="#508c44"/><text x="10.5" y="14.92" font-family="Liberation Mono" font-size="13" font-weight="bold" text-anchor="middle" fill="#2a4d25">I</text></svg>
<span class="t" style="left:630.20px;top:55.49px;font-size:19.50px;line-height:19.50px;color:#bbbbbb;letter-spacing:-0.745px;">UserService</span>
<svg class="r" style="left:18px;top:9.8px;" width="24.4" height="25.2" viewBox="0 0 24.400 25.200"><defs><linearGradient id="lym" x1="0" y1="0" x2="0" y2="1"><stop offset="0" stop-color="#fdd60e"/><stop offset="1" stop-color="#fd8a3c"/></linearGradient><linearGradient id="lom" x1="0" y1="0" x2="0" y2="1"><stop offset="0" stop-color="#fde30e"/><stop offset="0.45" stop-color="#fc6a1d"/><stop offset="1" stop-color="#fe3a6a"/></linearGradient><linearGradient id="lbm" x1="0" y1="0" x2="0.3" y2="1"><stop offset="0" stop-color="#07b8f5"/><stop offset="0.4" stop-color="#0a7cfa"/><stop offset="1" stop-color="#0a8ef8"/></linearGradient></defs><path d="M3 0.600L7 1.500 5.500 9.500 0.200 10.300z" fill="url(#lym)"/><path d="M6 1.400L12.200 1.900 14.600 5.200 14.600 6.500 4.500 7 5 3.500z" fill="#fe2857"/><path d="M0.200 10.400L5 6.500 5 12.200 2 12z" fill="#f545c6"/><path d="M0.200 14.300L3.200 11.400 5 12 5 19.500 2 21.600z" fill="url(#lom)"/><path d="M2 21.500L5 19 11 19.500 9.500 21.600 2.300 24.400z" fill="#fe2d9a"/><path d="M14 4.400L16.700 0.600 24.300 7.200 23.800 20.600 14.800 25.100 9.800 21.300 11 19.500 18.600 19.500 18.600 6z" fill="url(#lbm)"/><path d="M14 4.400L16.700 0.600 24.300 7.200 18.600 9.500 18.600 6 14.200 6z" fill="#07c3f2"/><rect x="4.800" y="6" width="14" height="13.700" fill="#0b0508"/><rect x="6.200" y="17" width="5" height="1.600" fill="#f4f4f4"/><text x="5.600" y="12.700" font-family="Liberation Mono" font-weight="bold" font-size="8.200" letter-spacing="-0.900" fill="#fff">IJ</text></svg>
<div class="r" style="left:678.500px;top:43px;width:563px;height:912.500px;box-sizing:border-box;background:#3c3f41;border:1.500px solid #585b5d;border-radius:9.500px;box-shadow:0 12px 46px rgba(0,0,0,0.40),0 2px 12px rgba(0,0,0,0.22)"></div>
<svg class="r" style="left:698px;top:51.2px;" width="24.4" height="25.2" viewBox="0 0 24.400 25.200"><defs><linearGradient id="lyd" x1="0" y1="0" x2="0" y2="1"><stop offset="0" stop-color="#fdd60e"/><stop offset="1" stop-color="#fd8a3c"/></linearGradient><linearGradient id="lod" x1="0" y1="0" x2="0" y2="1"><stop offset="0" stop-color="#fde30e"/><stop offset="0.45" stop-color="#fc6a1d"/><stop offset="1" stop-color="#fe3a6a"/></linearGradient><linearGradient id="lbd" x1="0" y1="0" x2="0.3" y2="1"><stop offset="0" stop-color="#07b8f5"/><stop offset="0.4" stop-color="#0a7cfa"/><stop offset="1" stop-color="#0a8ef8"/></linearGradient></defs><path d="M3 0.600L7 1.500 5.500 9.500 0.200 10.300z" fill="url(#lyd)"/><path d="M6 1.400L12.200 1.900 14.600 5.200 14.600 6.500 4.500 7 5 3.500z" fill="#fe2857"/><path d="M0.200 10.400L5 6.500 5 12.200 2 12z" fill="#f545c6"/><path d="M0.200 14.300L3.200 11.400 5 12 5 19.500 2 21.600z" fill="url(#lod)"/><path d="M2 21.500L5 19 11 19.500 9.500 21.600 2.300 24.400z" fill="#fe2d9a"/><path d="M14 4.400L16.700 0.600 24.300 7.200 23.800 20.600 14.800 25.100 9.800 21.300 11 19.500 18.600 19.500 18.600 6z" fill="url(#lbd)"/><path d="M14 4.400L16.700 0.600 24.300 7.200 18.600 9.500 18.600 6 14.200 6z" fill="#07c3f2"/><rect x="4.800" y="6" width="14" height="13.700" fill="#0b0508"/><rect x="6.200" y="17" width="5" height="1.600" fill="#f4f4f4"/><text x="5.600" y="12.700" font-family="Liberation Mono" font-weight="bold" font-size="8.200" letter-spacing="-0.900" fill="#fff">IJ</text></svg>
<span class="t" style="left:740.50px;top:55.97px;font-size:18.70px;line-height:18.70px;color:#bbbbbb;letter-spacing:0.475px;">Select Methods to Implement</span>
<svg class="r" style="left:1197px;top:57px;" width="16" height="15" viewBox="0 0 16 15"><path d="M1 0.500l14 14M15 0.500l-14 14" stroke="#c8c8c8" stroke-width="1.400"/></svg>
<svg class="r" style="left:710px;top:108px;" width="22" height="21" viewBox="0 0 22 21"><path d="M6.700 0.500v14" stroke="#afb1b3" stroke-width="3.100"/><path d="M0.800 12.300h11.600l-5.800 6.700z" fill="#afb1b3"/><text x="12.800" y="7.600" font-family="Liberation Sans" font-weight="bold" font-size="13" fill="#afb1b3" stroke="#afb1b3" stroke-width="0.400">a</text><text x="13.200" y="18.600" font-family="Liberation Sans" font-weight="bold" font-size="13" fill="#afb1b3" stroke="#afb1b3" stroke-width="0.400">z</text></svg>
<div class="r" style="left:743px;top:101.500px;width:29px;height:29px;border:2px solid #585b5e;border-radius:5.500px;background:#3b3e40"></div>
<svg class="r" style="left:749.5px;top:107.5px;" width="21" height="21" viewBox="0 0 21 21"><circle cx="10.500" cy="10.500" r="10.500" fill="#4f5254"/><text x="10.500" y="15" text-anchor="middle" font-family="Liberation Sans" font-size="13" fill="#5e6163">C</text></svg>
<div class="r" style="left:784px;top:103px;width:2px;height:30px;background:#4f5152;"></div>
<svg class="r" style="left:800px;top:107px;" width="18" height="22" viewBox="0 0 18 22"><g fill="#afb1b3"><rect x="0" y="0.300" width="18" height="3.300"/><rect x="0" y="18.200" width="18" height="3.300"/><path d="M9 5.200l4.800 4.300h-9.600z"/><path d="M9 16.800l4.800-4.300h-9.600z"/></g></svg>
<svg class="r" style="left:839px;top:109px;" width="18" height="18.4" viewBox="0 0 18 18.4"><g fill="#afb1b3"><rect x="0" y="7.300" width="18" height="3.300"/><path d="M9 5l5-4.700h-10z"/><path d="M9 13l5 4.700h-10z"/></g></svg>
<div class="r" style="left:698px;top:139px;width:525px;height:675px;box-sizing:border-box;border:1px solid #2f3133;border-left-color:#323436;background:#3c3f41"></div>
<svg class="r" style="left:709.2px;top:148.3px;" width="16" height="12" viewBox="0 0 16 12"><path d="M2.500 3l5.500 5.500 5.500-5.500" stroke="#c0c2c4" stroke-width="1.800" fill="none"/></svg>
<svg class="r" style="left:737.5px;top:145.4px;" width="21" height="21" viewBox="0 0 21 21"><circle cx="10.5" cy="10.5" r="10.5" fill="#508c44"/><text x="10.5" y="14.92" font-family="Liberation Mono" font-size="13" font-weight="bold" text-anchor="middle" fill="#2a4d25">I</text></svg>
<span class="t" style="left:764.50px;top:147.39px;font-size:19.50px;line-height:19.50px;color:#bbbbbb;letter-spacing:-0.467px;">com.example.demo1.service.UserService</span>
<div class="r" style="left:699px;top:170px;width:522px;height:30px;background:#4b6eaf;"></div>
<svg class="r" style="left:764px;top:175.5px;" width="23" height="21" viewBox="0 0 23 21"><defs><clipPath id="mc"><circle cx="11" cy="10.500" r="10.300"/></clipPath></defs><circle cx="11" cy="10.500" r="9.600" fill="#6683b8" stroke="#99acca" stroke-width="1.400"/><rect x="5.200" y="0" width="11.800" height="21" fill="#c085b4" clip-path="url(#mc)"/><text x="11.100" y="14.800" text-anchor="middle" font-family="Liberation Sans" font-size="13.500" fill="#3f2b3c">m</text></svg>
<svg class="r" style="left:790.5px;top:179.5px;" width="14" height="14" viewBox="0 0 14 14"><rect x="3.500" y="5.200" width="9.800" height="7.400" fill="#62a55f"/><path d="M1.300 6.500v-3a2.300 2.300 0 0 1 4.600 0v1.800" fill="none" stroke="#62a55f" stroke-width="1.500"/></svg>
<span class="t" style="left:815.50px;top:177.39px;font-size:19.50px;line-height:19.50px;color:#c9cdd4;letter-spacing:-0.382px;">getUserInfo():User</span>
<div class="r" style="left:710.200px;top:828px;width:21.300px;height:21px;box-sizing:border-box;border:1px solid #6b6b6b;border-radius:3px;background:#43494a"></div>
<div class="r" style="left:710.200px;top:868px;width:21.300px;height:21px;box-sizing:border-box;border:1px solid #6b6b6b;border-radius:3px;background:#43494a"></div>
<div class="r" style="left:710.200px;top:909.5px;width:21.300px;height:21px;box-sizing:border-box;border:1px solid #6b6b6b;border-radius:3px;background:#43494a"></div>
<svg class="r" style="left:710.5px;top:909.5px;" width="21" height="21" viewBox="0 0 21 21"><path d="M5 10.500l4 4.500 7.500-10" stroke="#c3c3c3" stroke-width="2.300" fill="none"/></svg>
<span class="t" style="left:740.40px;top:830.39px;font-size:19.50px;line-height:19.50px;color:#bbbbbb;letter-spacing:-0.600px;">Copy <u>J</u>avaDoc</span>
<span class="t" style="left:740.40px;top:870.39px;font-size:19.50px;line-height:19.50px;color:#bbbbbb;letter-spacing:-0.555px;">Generate missed JavaDoc</span>
<span class="t" style="left:740.40px;top:911.39px;font-size:19.50px;line-height:19.50px;color:#bbbbbb;letter-spacing:-0.134px;">Insert @<u>O</u>verride</span>
<div class="r" style="left:984.200px;top:902px;width:108px;height:36.300px;box-sizing:border-box;border:1.500px solid #4c708c;border-radius:5px;background:#365880"></div>
<span class="t" style="left:1024.50px;top:911.59px;font-size:19.50px;line-height:19.50px;color:#c8c8c8;letter-spacing:-0.875px;font-weight:bold;">OK</span>
<div class="r" style="left:1110.200px;top:902px;width:108px;height:36.300px;box-sizing:border-box;border:1.500px solid #5e6060;border-radius:5px;background:#4c5052"></div>
<span class="t" style="left:1135.50px;top:911.59px;font-size:19.50px;line-height:19.50px;color:#bbbbbb;letter-spacing:-0.616px;">Cancel</span>
<div class="r" style="left:0px;top:1007px;width:1920px;height:1px;background:#2c2e30;"></div>
<div class="r" style="left:0px;top:1008px;width:1920px;height:72px;background:linear-gradient(90deg,#d1e5ed 0%,#cde3eb 50%,#cfe4ec 100%);"></div>
<div class="r" style="left:0px;top:1009px;width:1920px;height:1px;background:rgba(150,180,190,0.18);"></div>
<svg class="r" style="left:24px;top:1029px;" width="36" height="32" viewBox="0 0 36 32"><defs><linearGradient id="wf" x1="0" y1="0" x2="1" y2="1"><stop offset="0" stop-color="#0a68cc"/><stop offset="1" stop-color="#0b4794"/></linearGradient></defs><rect x="0" y="0" width="36" height="32" rx="1.800" fill="url(#wf)"/><rect x="3" y="2.800" width="13.300" height="26.800" rx="1.800" fill="#f8f6f5"/><rect x="19.500" y="2.800" width="13.500" height="14.500" fill="#6bdbff"/><rect x="19.500" y="17.900" width="13.500" height="5.100" fill="#1fa8f8"/><rect x="19.500" y="23.600" width="13.500" height="6" fill="#0a84e8"/></svg>
<svg class="r" style="left:712px;top:1028.3px;" width="35" height="35" viewBox="0 0 35 35"><defs><linearGradient id="wg" gradientUnits="userSpaceOnUse" x1="0" y1="0" x2="35" y2="35"><stop offset="0" stop-color="#4fd0fb"/><stop offset="0.45" stop-color="#1c94e6"/><stop offset="1" stop-color="#0669cf"/></linearGradient></defs><g fill="url(#wg)"><rect x="0" y="0" width="16.700" height="16.700" rx="1"/><rect x="17.900" y="0" width="16.700" height="16.700" rx="1"/><rect x="0" y="17.900" width="16.700" height="16.700" rx="1"/><rect x="17.900" y="17.900" width="16.700" height="16.700" rx="1"/></g></svg>
<svg class="r" style="left:778px;top:1027px;" width="36" height="38" viewBox="0 0 36 38"><circle cx="19.900" cy="15.300" r="12.200" fill="#dbe9ee" stroke="#262626" stroke-width="3.700"/><path d="M11.300 24l-8 8.600" stroke="#262626" stroke-width="4" stroke-linecap="round"/></svg>
<svg class="r" style="left:843.7px;top:1028px;" width="37" height="36" viewBox="0 0 37 36"><rect x="10" y="0.500" width="26" height="23" rx="2" fill="#f1f1f1" stroke="#d4d7d9" stroke-width="0.800"/><rect x="0.500" y="10" width="26" height="23.500" rx="2" fill="#1f1f1f"/><rect x="10" y="10" width="16.500" height="14" fill="#bdbdbd"/></svg>
<svg class="r" style="left:910px;top:1029px;" width="36" height="32.5" viewBox="0 0 38 34"><path d="M0 4a2 2 0 0 1 2-2h10l4 4h20a2 2 0 0 1 2 2v22H0z" fill="#e9a823"/><path d="M0 9h38v23a2 2 0 0 1-2 2H2a2 2 0 0 1-2-2z" fill="#fbd14b"/><path d="M6 27a3 3 0 0 1 3-3h20a3 3 0 0 1 3 3v7H6z" fill="#1b74d0"/><rect x="12" y="28" width="14" height="2" rx="1" fill="#0c4fa0"/></svg>
<div class="r" style="left:924px;top:1069.5px;width:9px;height:3px;background:#8a8f92;border-radius:2px;"></div>
<svg class="r" style="left:976px;top:1027px;" width="36.2" height="36.2" viewBox="0 0 38 38"><defs><linearGradient id="eg" x1="0" y1="0" x2="1" y2="0"><stop offset="0" stop-color="#2fb6e9"/><stop offset="1" stop-color="#59d36b"/></linearGradient></defs><circle cx="19" cy="19" r="18.500" fill="#1766b8"/><path d="M1 17A18.500 18.500 0 0 1 37.500 17Q37 25 28 25Q22 25 22 21Q24 18 22 14Q16 8 8 12Q2 15 1 17z" fill="url(#eg)"/><path d="M6 19Q6 32 19 37.500Q9 37 2 27Q0 21 3 15Q7 11 12 12Q6 14 6 19z" fill="#0f4f9c"/><path d="M14 20Q13 30 24 33Q31 33 35 27Q28 31 22 27Q17 23 19 17Q15 16 14 20z" fill="#cde2ea"/></svg>
<div class="r" style="left:1005px;top:1069.5px;width:7px;height:3px;background:#8a8f92;border-radius:2px;"></div>
<svg class="r" style="left:1042px;top:1027px;" width="36" height="37" viewBox="0 0 36 37"><path d="M9.500 6V4.500a3 3 0 0 1 3-3h11a3 3 0 0 1 3 3v1.500" fill="none" stroke="#35b0f0" stroke-width="2.200"/><rect x="0" y="4.800" width="36" height="31" rx="3.500" fill="#114a8b"/><rect x="10" y="12.500" width="7.500" height="7.500" fill="#f25022"/><rect x="18.500" y="12.500" width="7.500" height="7.500" fill="#7fba00"/><rect x="10" y="21" width="7.500" height="7.500" fill="#00a4ef"/><rect x="18.500" y="21" width="7.500" height="7.500" fill="#ffb900"/></svg>
<svg class="r" style="left:1111px;top:1026px;" width="32" height="38" viewBox="0 0 32 38"><rect x="1" y="3" width="29" height="28" rx="1.500" fill="#59c5e3"/><rect x="1" y="31" width="29" height="3.500" fill="#e8e8e8"/><rect x="1" y="34" width="29" height="3" rx="1" fill="#b4551a"/><g stroke="#12708f" stroke-width="2"><path d="M6.500 11h18M6.500 16.500h18M6.500 22h18M6.500 27h12"/></g><g fill="#0d6a88"><rect x="5" y="0" width="2.500" height="5.500" rx="1.200"/><rect x="11.500" y="0" width="2.500" height="5.500" rx="1.200"/><rect x="18" y="0" width="2.500" height="5.500" rx="1.200"/><rect x="24.500" y="0" width="2.500" height="5.500" rx="1.200"/></g></svg>
<div class="r" style="left:1122px;top:1069.5px;width:9px;height:3px;background:#8a8f92;border-radius:2px;"></div>
<div class="r" style="left:1164px;top:1017px;width:56.5px;height:56.5px;background:#e4f0f5;border-radius:5px;box-shadow:0 0 0 0.500px rgba(255,255,255,0.5)"></div>
<div class="r" style="left:1180px;top:1069.5px;width:24px;height:3.5px;background:#1672cf;border-radius:2px;"></div>
<svg class="r" style="left:1173.3px;top:1026.3px;" width="36.8" height="38.0066" viewBox="0 0 24.400 25.200"><defs><linearGradient id="lyt" x1="0" y1="0" x2="0" y2="1"><stop offset="0" stop-color="#fdd60e"/><stop offset="1" stop-color="#fd8a3c"/></linearGradient><linearGradient id="lot" x1="0" y1="0" x2="0" y2="1"><stop offset="0" stop-color="#fde30e"/><stop offset="0.45" stop-color="#fc6a1d"/><stop offset="1" stop-color="#fe3a6a"/></linearGradient><linearGradient id="lbt" x1="0" y1="0" x2="0.3" y2="1"><stop offset="0" stop-color="#07b8f5"/><stop offset="0.4" stop-color="#0a7cfa"/><stop offset="1" stop-color="#0a8ef8"/></linearGradient></defs><path d="M3 0.600L7 1.500 5.500 9.500 0.200 10.300z" fill="url(#lyt)"/><path d="M6 1.400L12.200 1.900 14.600 5.200 14.600 6.500 4.500 7 5 3.500z" fill="#fe2857"/><path d="M0.200 10.400L5 6.500 5 12.200 2 12z" fill="#f545c6"/><path d="M0.200 14.300L3.200 11.400 5 12 5 19.500 2 21.600z" fill="url(#lot)"/><path d="M2 21.500L5 19 11 19.500 9.500 21.600 2.300 24.400z" fill="#fe2d9a"/><path d="M14 4.400L16.700 0.600 24.300 7.200 23.800 20.600 14.800 25.100 9.800 21.300 11 19.500 18.600 19.500 18.600 6z" fill="url(#lbt)"/><path d="M14 4.400L16.700 0.600 24.300 7.200 18.600 9.500 18.600 6 14.200 6z" fill="#07c3f2"/><rect x="4.800" y="6" width="14" height="13.700" fill="#0b0508"/><rect x="6.200" y="17" width="5" height="1.600" fill="#f4f4f4"/><text x="5.600" y="12.700" font-family="Liberation Mono" font-weight="bold" font-size="8.200" letter-spacing="-0.900" fill="#fff">IJ</text></svg>
<svg class="r" style="left:1608px;top:1038px;" width="20" height="12" viewBox="0 0 20 12"><path d="M1.500 10.500l8.500-8.500 8.500 8.500" stroke="#1a1a1a" stroke-width="1.600" fill="none"/></svg>
<span class="t" style="left:1648px;top:1031.800px;font-size:22px;line-height:26px;color:#1a1a1a;font-family:'Liberation Sans','Noto Sans CJK SC',sans-serif">英</span>
<svg class="r" style="left:1696px;top:1033px;" width="25" height="20" viewBox="0 0 25 20"><g stroke="#1a1a1a" stroke-width="1.700" fill="none" stroke-linecap="round"><path d="M1.500 7.500a15.500 15.500 0 0 1 22 0"/><path d="M5 11.500a10.500 10.500 0 0 1 15 0"/><path d="M8.500 15a5.500 5.500 0 0 1 8 0"/></g><circle cx="12.500" cy="17.500" r="1.700" fill="#1a1a1a"/></svg>
<svg class="r" style="left:1731px;top:1034px;" width="26" height="19" viewBox="0 0 26 19"><path d="M1.500 6.500h4l5-4.500v15l-5-4.500h-4z" fill="none" stroke="#1a1a1a" stroke-width="1.500" stroke-linejoin="round"/><path d="M13.500 6a5 5 0 0 1 0 7" fill="none" stroke="#1a1a1a" stroke-width="1.400"/><path d="M16.500 3.500a9 9 0 0 1 0 12" fill="none" stroke="#8f979b" stroke-width="1.300"/><path d="M19.500 1a13 13 0 0 1 0 17" fill="none" stroke="#aab4b9" stroke-width="1.200"/></svg>
<svg class="r" style="left:1767px;top:1032px;" width="27" height="21" viewBox="0 0 27 21"><rect x="6.800" y="5.500" width="16.500" height="12.500" rx="2.500" fill="none" stroke="#1a1a1a" stroke-width="1.900"/><rect x="24" y="9.200" width="2.200" height="5" rx="1" fill="#1a1a1a"/><path d="M11.500 8.700h8.500v6h-10z" fill="#1a1a1a"/><path d="M2.200 1v3.500M6.200 1v3.500" stroke="#1a1a1a" stroke-width="1.700"/><path d="M0.500 4.200h7.400v3a3.700 3.700 0 0 1-7.400 0z" fill="#1a1a1a"/><path d="M4.200 10v7.500" stroke="#1a1a1a" stroke-width="1.700"/></svg>
<span class="t" style="left:1849.00px;top:1025.09px;font-size:17.50px;line-height:17.50px;color:#1a1a1a;letter-spacing:-0.558px;">15:26</span>
<span class="t" style="left:1817.00px;top:1047.59px;font-size:17.50px;line-height:17.50px;color:#1a1a1a;letter-spacing:0.611px;">2022/8/5</span>
<span class="t" style="left:1711.00px;top:1053.09px;font-size:17.50px;line-height:17.50px;color:rgba(255,255,255,0.82);letter-spacing:0.213px;text-shadow:0 0 2px rgba(60,60,60,0.9),1px 1px 1px rgba(80,80,80,0.6);">CSDN @package_black</span>
</body></html>
